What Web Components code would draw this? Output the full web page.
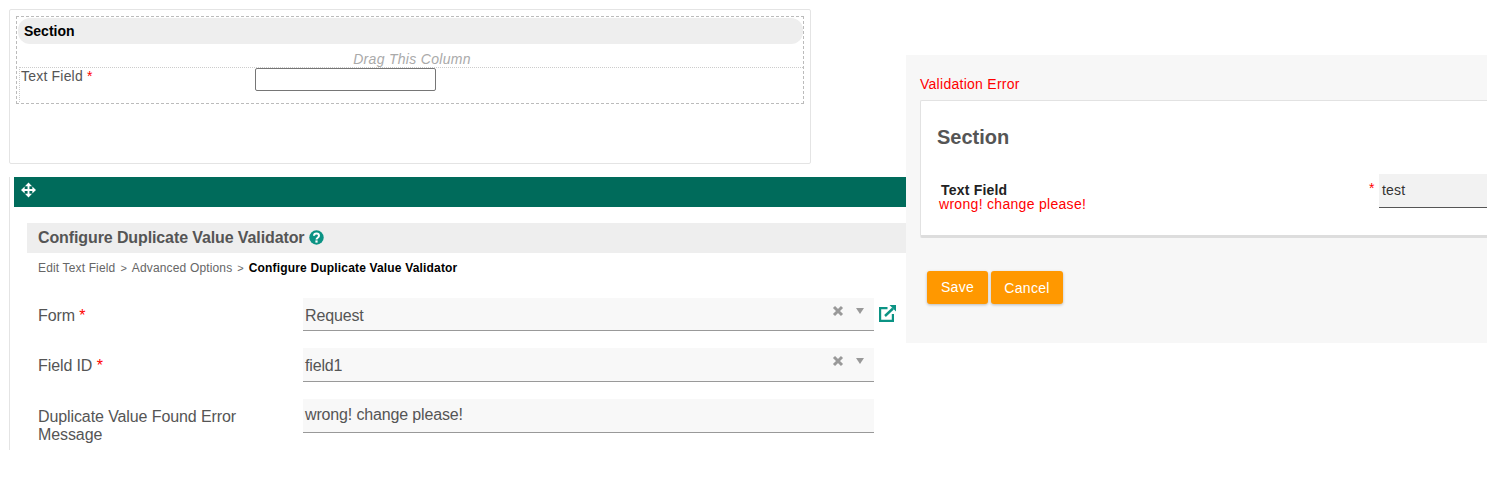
<!DOCTYPE html>
<html><head><meta charset="utf-8">
<style>
html,body{margin:0;padding:0;background:#fff;overflow:hidden}
body{font:14px/20px "Liberation Sans",Arial,sans-serif;color:#555}
#page{display:grid;grid-template-columns:906px 581px;width:1487px;height:485px;align-items:start}
#left{display:flex;flex-direction:column;min-width:0}
</style></head><body>
<div id="page">
 <div id="left">
  <builder-card></builder-card>
  <validator-editor></validator-editor>
 </div>
 <preview-panel></preview-panel>
</div>
<template id="t-card"><style>
:host{display:block;box-sizing:border-box;width:802px;height:155px;margin:9px 0 0 9px;border:1px solid #e4e4e4;border-radius:2px;padding:6px 6px 0 6px;background:#fff}
.drop{box-sizing:border-box;height:88px;border:1px dashed #bbb;padding:1px 0 0 1px;position:relative}
.sec{box-sizing:border-box;height:26px;background:#eee;border-radius:12px;font:bold 14px/26px "Liberation Sans",Arial,sans-serif;color:#000;padding-left:6px}
.drag{text-align:center;font:italic 14px/16px "Liberation Sans",Arial,sans-serif;letter-spacing:.3px;color:#aaa;margin-top:7px;height:16px;padding-left:3px}
.row{box-sizing:border-box;height:35px;margin:0 0 0 1px;border-top:1px dotted #ccc;border-left:1px dotted #ccc;display:flex;align-items:flex-start}
.lab{width:235px;box-sizing:border-box;padding-left:1px;font:14px/16px "Liberation Sans",Arial,sans-serif;letter-spacing:.2px;color:#555}
.lab i{font-style:normal;color:red}
.inp{box-sizing:border-box;width:181px;height:23px;border:1px solid #767676;border-radius:2px;background:#fff}
</style>
<div class="drop"><div class="sec">Section</div><div class="drag">Drag This Column</div>
<div class="row"><div class="lab">Text Field <i>*</i></div><div class="inp"></div></div></div>
</template>
<template id="t-editor"><style>
:host{display:block;box-sizing:border-box;margin:13px 0 0 9px;height:273px;border-left:1px solid #e4e4e4;padding-left:4px;width:897px;overflow:hidden}
.bar{height:30px;background:#006b5b;display:flex;align-items:center;padding-left:7px;box-sizing:border-box}
.bar svg{display:block;margin-top:-4px}
.body{padding:16px 0 0 13px}
.h{box-sizing:border-box;height:30px;background:#eee;padding-left:11px;display:flex;align-items:center;gap:5px;font:bold 16px/30px "Liberation Sans",Arial,sans-serif;letter-spacing:-.11px;color:#555}
.h svg{margin-top:-1px}
.crumb{padding:7px 0 0 11px;font:12px/16px "Liberation Sans",Arial,sans-serif;color:#666;letter-spacing:.15px;display:flex;gap:5px}
.crumb b{color:#000;font-weight:bold;letter-spacing:.17px}
.crumb s{text-decoration:none;color:#666;font-size:11px;letter-spacing:0}
.rows{padding:22px 0 0 11px;display:flex;flex-direction:column}
</style>
<div class="bar"><svg width="15" height="16" viewBox="0 0 16 16"><path fill="#fff" d="M8 0l3.800 3.900H9v3.100h3.100V4.200L16 8l-3.900 3.800V9H9v3.100h2.800L8 16l-3.800-3.900H7V9H3.900v2.800L0 8l3.900-3.800V7H7V3.900H4.200z"/></svg></div>
<div class="body">
<div class="h">Configure Duplicate Value Validator <svg width="15" height="15" viewBox="0 0 15 15"><circle cx="7.500" cy="7.500" r="7.200" fill="#0b9384"/><path fill="none" stroke="#fff" stroke-width="2" d="M5 5.800c0-3.200 5-3.200 5 0 0 2-2.500 1.800-2.500 3.600"/><rect x="6.400" y="10.400" width="2.200" height="2.200" fill="#fff"/></svg></div>
<div class="crumb"><span>Edit Text Field</span><s>&gt;</s><span>Advanced Options</span><s>&gt;</s><b>Configure Duplicate Value Validator</b></div>
<div class="rows">
<form-row label="Form" req h="33" gap="17" ctl="select" val="Request" ext></form-row>
<form-row label="Field ID" req h="34" gap="17" ctl="select" val="field1"></form-row>
<form-row label="Duplicate Value Found Error Message" h="34" ctl="text" val="wrong! change please!"></form-row>
</div></div>
</template>
<template id="t-row"><style>
:host{display:flex;align-items:flex-start}
.l{box-sizing:border-box;width:265px;padding-right:40px;font:16px/18px "Liberation Sans",Arial,sans-serif;letter-spacing:-.1px;color:#555;padding-top:9px}
.l i{font-style:normal;color:red}
.c{box-sizing:border-box;width:571px;background:#f8f8f8;border-bottom:1px solid #999;font:16px/36px "Liberation Sans",Arial,sans-serif;letter-spacing:-.15px;color:#555;padding-left:2px;display:flex;justify-content:space-between}
.ic{display:flex;align-items:flex-start;padding:7px 0 0 0}
.tri{width:0;height:0;border:4px solid transparent;border-top:6px solid #999;border-bottom:0;margin:3px 10px 0 12px}
.ext{margin:7px 0 0 5px;display:block}
</style><div class="l"></div><div class="c"><span class="v"></span></div></template>
<template id="t-panel"><style>
:host{display:block;box-sizing:border-box;margin-top:55px;height:288px;background:#f7f7f7;padding:19px 0 0 14px;overflow:hidden}
.err{font:14px/20px "Liberation Sans",Arial,sans-serif;letter-spacing:.27px;color:red;height:26px}
.box{box-sizing:border-box;height:138px;width:581px;background:#fff;border:1px solid #e2e2e2;border-bottom:3px solid #ddd;border-right:0;border-radius:2px 0 0 2px;padding:24px 0 0 16px}
h2{margin:0;font:bold 20px/24px "Liberation Sans",Arial,sans-serif;color:#555}
.row{display:flex;margin-top:32px;padding-left:2px;align-items:flex-start}
.lab{width:431px;font:14px/15px "Liberation Sans",Arial,sans-serif}
.lab b{display:block;color:#222;padding-left:2px;line-height:14px;padding-top:2px;letter-spacing:.2px}
.lab span{color:red;display:block;line-height:14px;letter-spacing:.3px}
.st{width:10px;color:red;font:14px/16px "Liberation Sans",Arial,sans-serif;margin-left:-1px;margin-top:-1px}
.in{box-sizing:border-box;width:108px;height:34px;background:#f2f2f2;border-bottom:1px solid #555;font:14px/33px "Liberation Sans",Arial,sans-serif;letter-spacing:.2px;color:#333;padding-left:3px;margin-top:-7px}
.btns{display:flex;gap:3px;margin:33px 0 0 7px}
</style>
<div class="err">Validation Error</div>
<div class="box"><h2>Section</h2><div class="row"><div class="lab"><b>Text Field</b><span>wrong! change please!</span></div><div class="st">*</div><div class="in">test</div></div></div>
<div class="btns"><o-btn w="61" dy="0">Save</o-btn><o-btn w="72" dy="1">Cancel</o-btn></div>
</template>
<script>
function mount(el,id){const r=el.attachShadow({mode:'open'});r.appendChild(document.getElementById(id).content.cloneNode(true));return r}
customElements.define('builder-card',class extends HTMLElement{constructor(){super();mount(this,'t-card')}});
customElements.define('validator-editor',class extends HTMLElement{constructor(){super();mount(this,'t-editor')}});
customElements.define('preview-panel',class extends HTMLElement{constructor(){super();mount(this,'t-panel')}});
customElements.define('form-row',class extends HTMLElement{connectedCallback(){
 if(this.shadowRoot)return;const r=mount(this,'t-row');
 const l=r.querySelector('.l');l.textContent=this.getAttribute('label');
 if(this.hasAttribute('req')){l.append(' ');const i=document.createElement('i');i.textContent='*';l.append(i)}
 r.querySelector('.v').textContent=this.getAttribute('val');
 r.querySelector('.c').style.height=this.getAttribute('h')+'px';
 this.style.marginBottom=(this.getAttribute('gap')||0)+'px';
 if(this.getAttribute('ctl')==='select'){
  const ic=document.createElement('div');ic.className='ic';
  ic.innerHTML='<svg width="12" height="12" viewBox="0 0 12 12"><path stroke="#999" stroke-width="3" d="M2 2l8 8M10 2l-8 8"/></svg><div class="tri"></div>';
  r.querySelector('.c').append(ic);
 }else{r.querySelector('.v').style.cssText='line-height:31px'}
 if(this.hasAttribute('ext')){
  const d=document.createElement('div');
  d.innerHTML='<svg class="ext" width="17" height="17" viewBox="0 0 17 17"><path fill="none" stroke="#0b9384" stroke-width="2.200" d="M8.500 3.100H1.100v12.800h12.800V9"/><path fill="none" stroke="#0b9384" stroke-width="2.400" d="M6 11L14 3.500"/><path fill="#0b9384" d="M10.500 0H17v6.500z"/></svg>';
  r.append(d);
 }
}});
customElements.define('o-btn',class extends HTMLElement{constructor(){super();const r=this.attachShadow({mode:'open'});
 r.innerHTML='<style>:host{display:block;box-sizing:border-box;height:33px;background:#ff9800;border-radius:3px;box-shadow:0 1px 3px rgba(0,0,0,.25);color:#fff;font:14px/33px "Liberation Sans",Arial,sans-serif;letter-spacing:.3px;text-align:center}</style><slot></slot>'}
 connectedCallback(){this.style.width=this.getAttribute('w')+'px';const d=+this.getAttribute('dy');this.style.lineHeight=(33+2*d)+'px'}});
</script>
</body></html>
